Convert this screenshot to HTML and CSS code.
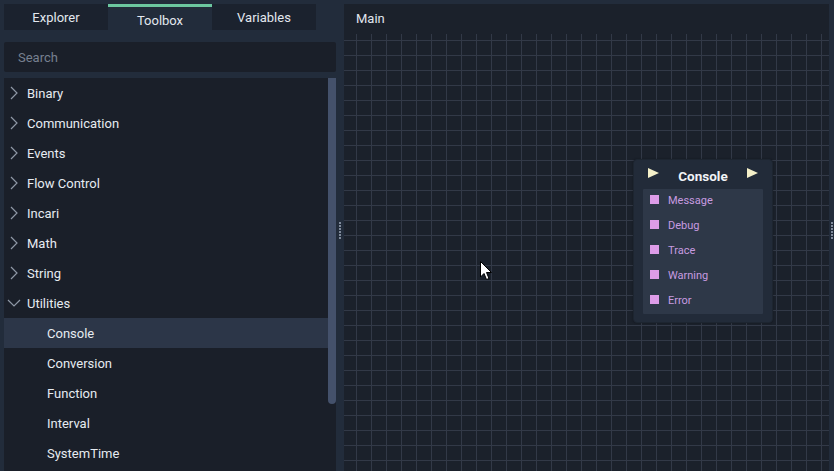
FILE: index.html
```html
<!DOCTYPE html>
<html>
<head>
<meta charset="utf-8">
<link rel="stylesheet" href="styles.css">
</head>
<body>
<div class="app">
  <aside class="sidebar">
    <div class="tabs">
      <div class="tab">Explorer</div>
      <div class="tab active">Toolbox</div>
      <div class="tab">Variables</div>
    </div>
    <div class="search">Search</div>
    <div class="tree">
      <div class="tree-items">
        <div class="row"><span class="chev"><svg width="8" height="14" viewBox="0 0 8 14"><path d="M1 1 L7 7 L1 13" fill="none" stroke="#8f98a6" stroke-width="1.2"/></svg></span>Binary</div>
        <div class="row"><span class="chev"><svg width="8" height="14" viewBox="0 0 8 14"><path d="M1 1 L7 7 L1 13" fill="none" stroke="#8f98a6" stroke-width="1.2"/></svg></span>Communication</div>
        <div class="row"><span class="chev"><svg width="8" height="14" viewBox="0 0 8 14"><path d="M1 1 L7 7 L1 13" fill="none" stroke="#8f98a6" stroke-width="1.2"/></svg></span>Events</div>
        <div class="row"><span class="chev"><svg width="8" height="14" viewBox="0 0 8 14"><path d="M1 1 L7 7 L1 13" fill="none" stroke="#8f98a6" stroke-width="1.2"/></svg></span>Flow Control</div>
        <div class="row"><span class="chev"><svg width="8" height="14" viewBox="0 0 8 14"><path d="M1 1 L7 7 L1 13" fill="none" stroke="#8f98a6" stroke-width="1.2"/></svg></span>Incari</div>
        <div class="row"><span class="chev"><svg width="8" height="14" viewBox="0 0 8 14"><path d="M1 1 L7 7 L1 13" fill="none" stroke="#8f98a6" stroke-width="1.2"/></svg></span>Math</div>
        <div class="row"><span class="chev"><svg width="8" height="14" viewBox="0 0 8 14"><path d="M1 1 L7 7 L1 13" fill="none" stroke="#8f98a6" stroke-width="1.2"/></svg></span>String</div>
        <div class="row"><span class="chev down"><svg width="14" height="8" viewBox="0 0 14 8"><path d="M1 1 L7 7 L13 1" fill="none" stroke="#8f98a6" stroke-width="1.2"/></svg></span>Utilities</div>
        <div class="row child selected">Console</div>
        <div class="row child">Conversion</div>
        <div class="row child">Function</div>
        <div class="row child">Interval</div>
        <div class="row child">SystemTime</div>
      </div>
      <div class="scrolltrack"><div class="thumb"></div></div>
    </div>
  </aside>
  <div class="splitter"><div class="grip"></div></div>
  <main class="editor">
    <div class="editor-head">Main</div>
    <div class="canvas">
      <div class="node">
        <div class="node-head">
          <svg class="tri" width="11" height="10" viewBox="0 0 11 10"><path d="M0 0 L11 5 L0 10 Z" fill="#f4f0c9"/></svg>
          <span class="node-title">Console</span>
          <svg class="tri" width="11" height="10" viewBox="0 0 11 10"><path d="M0 0 L11 5 L0 10 Z" fill="#f4f0c9"/></svg>
        </div>
        <div class="node-body">
          <div class="pin"><span class="sq"></span>Message</div>
          <div class="pin"><span class="sq"></span>Debug</div>
          <div class="pin"><span class="sq"></span>Trace</div>
          <div class="pin"><span class="sq"></span>Warning</div>
          <div class="pin"><span class="sq"></span>Error</div>
        </div>
      </div>
      <svg class="cursor" width="13" height="20" viewBox="0 0 13 20"><path d="M0.5 0.5 L0.5 16 L4 12.5 L6.5 18.5 L9 17.5 L6.5 11.5 L11.5 11.5 Z" fill="#ffffff" stroke="#000000" stroke-width="1"/></svg>
    </div>
  </main>
  <div class="splitter right"><div class="grip"></div></div>
</div>
</body>
</html>
```

FILE: styles.css
```css
* { box-sizing: border-box; }
html, body {
  margin: 0;
  padding: 0;
  width: 834px;
  height: 471px;
  overflow: hidden;
  background: #222c3b;
  font-family: Roboto, "Liberation Sans", sans-serif;
  font-size: 13px;
  color: #e3e8ef;
}
.app {
  display: flex;
  height: 471px;
}
.sidebar {
  width: 336px;
  padding: 4px 0 0 4px;
  display: flex;
  flex-direction: column;
}
.tabs {
  display: flex;
  height: 26px;
}
.tab {
  width: 104px;
  background: #1b222e;
  display: flex;
  align-items: center;
  justify-content: center;
  padding-top: 1px;
  color: #e3e8ef;
}
.tab.active {
  background: #222c3b;
  border-top: 3px solid #6cc7a0;
  padding-top: 4px;
}
.search {
  margin-top: 12px;
  height: 30px;
  background: #1a1f29;
  border-radius: 2px;
  color: #778090;
  padding-left: 14px;
  display: flex;
  align-items: center;
}
.tree {
  margin-top: 6px;
  flex: 1;
  background: #1a1f29;
  display: flex;
  min-height: 0;
}
.tree-items {
  flex: 1;
}
.row {
  height: 30px;
  display: flex;
  align-items: center;
  padding-left: 6px;
  color: #e6ebf1;
}
.chev {
  width: 17px;
  display: flex;
  align-items: center;
}
.chev.down {
  margin-left: -3px;
  width: 20px;
}
.row.child {
  padding-left: 43px;
}
.row.selected {
  background: #2c3648;
}
.scrolltrack {
  width: 8px;
}
.thumb {
  height: 326px;
  background: #44516b;
  border-radius: 0 0 4px 4px;
}
.splitter {
  width: 8px;
  display: flex;
  align-items: center;
  justify-content: center;
}
.splitter.right {
  width: 5px;
  justify-content: flex-end;
  padding-right: 1px;
}
.grip {
  width: 2px;
  height: 17px;
  margin-top: -10px;
  background: repeating-linear-gradient(to bottom, #7f8a9b 0 2px, transparent 2px 3px);
}
.editor {
  width: 485px;
  margin-top: 4px;
  display: flex;
  flex-direction: column;
  background: #1b212b;
}
.editor-head {
  height: 30px;
  padding-left: 12px;
  display: flex;
  align-items: center;
  color: #e0e6ee;
  padding-bottom: 1px;
}
.canvas {
  flex: 1;
  position: relative;
  background-color: #1b212b;
  background-image:
    linear-gradient(to right, #323947 1px, transparent 1px),
    linear-gradient(to bottom, #323947 1px, transparent 1px);
  background-size: 15px 15px;
  background-position: 12px 6px;
}
.node {
  position: absolute;
  left: 289px;
  top: 125px;
  width: 140px;
  height: 164px;
  background: #222b39;
  border: 1px solid #1d2530;
  border-radius: 4px;
  padding: 0 9px;
  box-shadow: 0 0 2px rgba(0,0,0,0.35);
}
.node-head {
  height: 29px;
  display: flex;
  align-items: center;
  justify-content: space-between;
  padding: 0 5px 0 5px;
}
.tri { margin-top: -3px; }
.node-title {
  font-weight: bold;
  color: #f1f3f6;
  font-size: 13.5px;
  margin-top: 2px;
}
.node-body {
  background: #2e3848;
  height: 125px;
  border-radius: 1px;
}
.pin {
  height: 25px;
  display: flex;
  align-items: center;
  padding-left: 7px;
  color: #c79be0;
  font-size: 11px;
  padding-bottom: 3px;
}
.sq {
  width: 9px;
  height: 9px;
  background: #dd9ce8;
  margin-right: 9px;
  margin-top: -1px;
}
.cursor {
  position: absolute;
  left: 136px;
  top: 227px;
}
```
